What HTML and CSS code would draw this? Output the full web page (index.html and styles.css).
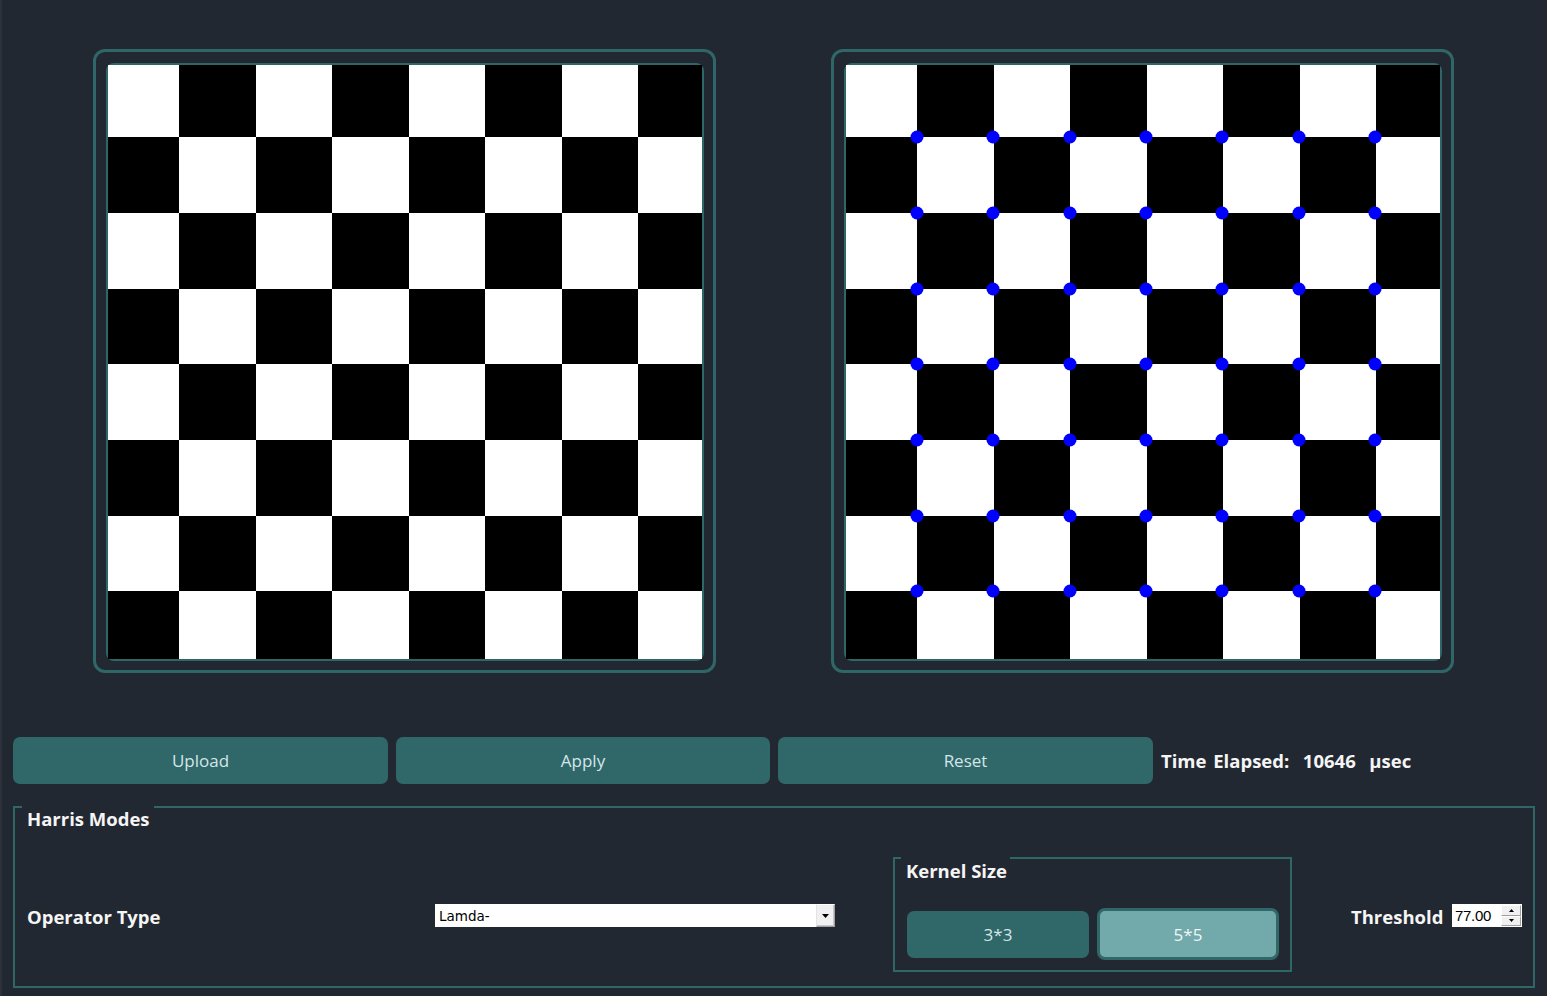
FILE: index.html
```html
<!DOCTYPE html>
<html>
<head>
<meta charset="utf-8">
<title>Harris</title>
<link rel="stylesheet" href="styles.css">
</head>
<body>
<div class="app">
  <div class="views">
    <div class="frame">
      <div class="inner">
        <svg class="board" viewBox="0 0 594 594" width="594" height="594" shape-rendering="crispEdges">
          <defs>
            <g id="ev"><rect x="71" width="77" height="1"/><rect x="224" width="77" height="1"/><rect x="377" width="77" height="1"/><rect x="530" width="64" height="1"/></g>
            <g id="od"><rect x="0" width="71" height="1"/><rect x="148" width="76" height="1"/><rect x="301" width="76" height="1"/><rect x="454" width="76" height="1"/></g>
            <g id="cb">
              <rect width="594" height="594" fill="#fff"/>
              <use href="#ev" transform="translate(0 0) scale(1 72)"/>
              <use href="#od" transform="translate(0 72) scale(1 76)"/>
              <use href="#ev" transform="translate(0 148) scale(1 76)"/>
              <use href="#od" transform="translate(0 224) scale(1 75)"/>
              <use href="#ev" transform="translate(0 299) scale(1 76)"/>
              <use href="#od" transform="translate(0 375) scale(1 76)"/>
              <use href="#ev" transform="translate(0 451) scale(1 75)"/>
              <use href="#od" transform="translate(0 526) scale(1 68)"/>
            </g>
            <g id="dots" fill="#0000ff"><circle cx="71" cy="0" r="6.5"/><circle cx="147" cy="0" r="6.5"/><circle cx="224" cy="0" r="6.5"/><circle cx="300" cy="0" r="6.5"/><circle cx="376" cy="0" r="6.5"/><circle cx="453" cy="0" r="6.5"/><circle cx="529" cy="0" r="6.5"/></g>
          </defs>
          <use href="#cb"/>
        </svg>
      </div>
    </div>
    <div class="frame">
      <div class="inner">
        <svg class="board" viewBox="0 0 594 594" width="594" height="594">
          <use href="#cb" shape-rendering="crispEdges"/>
          <use href="#dots" transform="translate(0 72)"/>
          <use href="#dots" transform="translate(0 148)"/>
          <use href="#dots" transform="translate(0 224)"/>
          <use href="#dots" transform="translate(0 299)"/>
          <use href="#dots" transform="translate(0 375)"/>
          <use href="#dots" transform="translate(0 451)"/>
          <use href="#dots" transform="translate(0 526)"/>
        </svg>
      </div>
    </div>
  </div>

  <div class="actions">
    <button class="btn w375">Upload</button>
    <button class="btn w374">Apply</button>
    <button class="btn w375">Reset</button>
    <div class="time">Time Elapsed:  10646  µsec</div>
  </div>

  <div class="group harris">
    <div class="group-title harris-title">Harris Modes</div>
    <div class="modes-row">
      <div class="lbl op-lbl">Operator Type</div>
      <div class="combo">
        <span class="combo-text">Lamda-</span>
        <span class="combo-btn"><svg width="7" height="4" viewBox="0 0 7 4"><path d="M0 0H7L3.5 4Z" fill="#000"/></svg></span>
      </div>
      <div class="group kernel">
        <div class="group-title kernel-title">Kernel Size</div>
        <div class="kernel-row">
          <button class="kbtn">3*3</button>
          <button class="kbtn active">5*5</button>
        </div>
      </div>
      <div class="lbl thr-lbl">Threshold</div>
      <div class="spin">
        <span class="spin-text">77.00</span>
        <span class="spin-btns">
          <span class="sb"><svg width="5" height="3" viewBox="0 0 5 3"><path d="M0 3H5L2.5 0Z" fill="#000"/></svg></span>
          <span class="sb"><svg width="5" height="3" viewBox="0 0 5 3"><path d="M0 0H5L2.5 3Z" fill="#000"/></svg></span>
        </span>
      </div>
    </div>
  </div>
</div>
</body>
</html>
```

FILE: styles.css
```css
html, body {
  margin: 0;
  padding: 0;
  background: #222831;
}

.app {
  width: 1547px;
  height: 996px;
  box-sizing: border-box;
  border-left: 2px solid #2b3039;
  background: #222831;
  font-family: "Open Sans", "Noto Sans", sans-serif;
  overflow: hidden;
}

.views {
  display: flex;
  gap: 115px;
  padding: 49px 0 0 91px;
}

.frame {
  width: 623px;
  height: 624px;
  box-sizing: border-box;
  border: 3px solid #2f6769;
  border-radius: 12px;
  padding: 11px 9px 9px 10px;
}

.inner {
  width: 598px;
  height: 598px;
  box-sizing: border-box;
  border: 2px solid #2f6769;
  border-radius: 8px;
  overflow: visible;
}

.board {
  display: block;
}

.actions {
  display: flex;
  align-items: center;
  gap: 8px;
  margin-top: 64px;
  padding-left: 11px;
}

.btn {
  height: 47px;
  border: none;
  border-radius: 7px;
  background: #306769;
  color: #d3e6e8;
  font-family: "Open Sans", "Noto Sans", sans-serif;
  font-size: 17px;
  padding: 0;
}

.w375 { width: 375px; }
.w374 { width: 374px; }

.time {
  white-space: pre;
  color: #f5f5f5;
  font-weight: 700;
  font-size: 18.5px;
  word-spacing: 2px;
}

.group {
  position: relative;
  box-sizing: border-box;
  border: 2px solid #2f6769;
}

.harris {
  margin: 22px 0 0 11px;
  width: 1522px;
  height: 182px;
}

.group-title {
  position: absolute;
  top: -2px;
  background: #222831;
  color: #f5f5f5;
  font-weight: 700;
  font-size: 18.5px;
  line-height: 26px;
  white-space: nowrap;
}

.harris-title {
  left: 7px;
  padding: 0 4px 0 5px;
}

.kernel-title {
  left: 6px;
  padding: 1px 3px 0 5px;
}

.modes-row {
  display: flex;
  align-items: center;
  padding: 49px 0 0 12px;
}

.lbl {
  color: #f5f5f5;
  font-weight: 700;
  font-size: 18.5px;
  white-space: nowrap;
}

.op-lbl {
  width: 408px;
  margin-top: 4px;
}

.combo {
  width: 400px;
  height: 23px;
  margin-top: 2px;
  background: #ffffff;
  display: flex;
  align-items: center;
  justify-content: space-between;
  box-sizing: border-box;
}

.combo-text {
  font-family: "DejaVu Sans", "Liberation Sans", sans-serif;
  font-size: 13.5px;
  color: #000;
  padding-left: 4px;
}

.combo-btn {
  width: 19px;
  height: 23px;
  box-sizing: border-box;
  background: #f0f0f0;
  border-left: 1px solid #e3e3e3;
  border-top: 1px solid #ffffff;
  border-right: 1px solid #a0a0a0;
  border-bottom: 1px solid #a0a0a0;
  box-shadow: inset -1px -1px 0 #c8c8c8;
  display: flex;
  align-items: center;
  justify-content: center;
}

.kernel {
  margin-left: 58px;
  width: 399px;
  height: 115px;
}

.kernel-row {
  display: flex;
  align-items: center;
  gap: 8px;
  height: 52px;
  padding: 49px 0 0 12px;
}

.kbtn {
  width: 182px;
  height: 47px;
  box-sizing: border-box;
  border: none;
  border-radius: 7px;
  background: #306769;
  color: #d3e6e8;
  font-family: "Open Sans", "Noto Sans", sans-serif;
  font-size: 17px;
  padding: 0;
}

.kbtn.active {
  height: 52px;
  border: 3px solid #306769;
  border-radius: 8px;
  background: #72a9aa;
  color: #eef6f6;
}

.thr-lbl {
  margin-left: 59px;
  width: 101px;
  margin-top: 4px;
}

.spin {
  width: 70px;
  height: 23px;
  margin-top: 2px;
  background: #ffffff;
  display: flex;
  align-items: center;
  justify-content: space-between;
  box-sizing: border-box;
  padding-right: 1px;
}

.spin-text {
  font-family: "Liberation Sans", "DejaVu Sans", sans-serif;
  font-size: 15px;
  color: #000;
  padding-left: 3px;
  letter-spacing: -0.3px;
}

.spin-btns {
  display: flex;
  flex-direction: column;
  width: 20px;
  height: 21px;
}

.sb {
  flex: 1;
  box-sizing: border-box;
  background: #f0f0f0;
  border-top: 1px solid #ffffff;
  border-left: 1px solid #ffffff;
  border-right: 1px solid #a0a0a0;
  border-bottom: 1px solid #a0a0a0;
  display: flex;
  align-items: center;
  justify-content: center;
}
```
